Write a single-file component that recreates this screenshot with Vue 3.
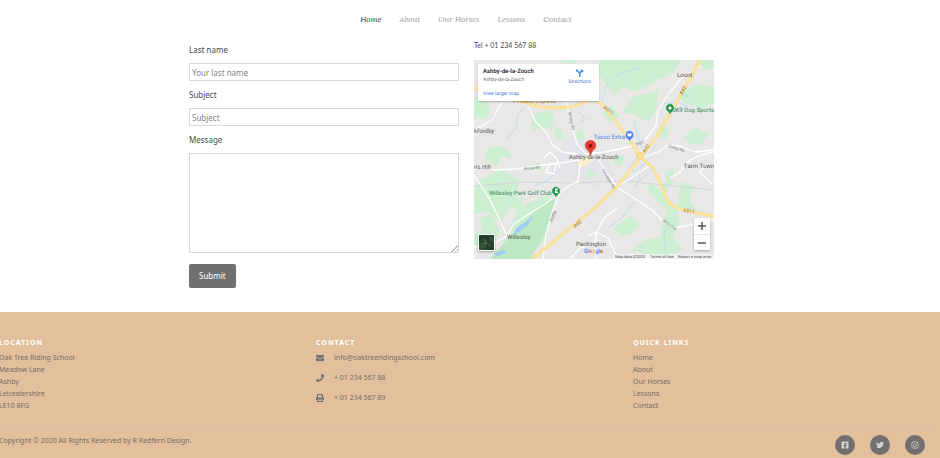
<script setup>
const nav = ['Home', 'About', 'Our Horses', 'Lessons', 'Contact']
const address = ['Oak Tree Riding School', 'Meadow Lane', 'Ashby', 'Leicestershire', 'LE10 8FG']
const contacts = [
  {
    text: 'info@oaktreeridingschool.com',
    icon: 'M502.300 190.800c3.900-3.100 9.700-.2 9.700 4.700V400c0 26.500-21.500 48-48 48H48c-26.500 0-48-21.500-48-48V195.600c0-5 5.700-7.800 9.700-4.700 22.400 17.400 52.100 39.500 154.100 113.600 21.100 15.400 56.700 47.800 92.200 47.600 35.700.3 72-32.800 92.300-47.600 102-74.100 131.600-96.300 154-113.700zM256 320c23.200.4 56.600-29.200 73.400-41.400 132.700-96.300 142.800-104.700 173.400-128.700 5.800-4.500 9.200-11.500 9.200-18.900v-19c0-26.500-21.500-48-48-48H48c-26.500 0-48 21.500-48 48v19c0 7.400 3.400 14.300 9.200 18.900 30.600 23.900 40.700 32.400 173.400 128.700 16.800 12.200 50.200 41.800 73.400 41.400z',
  },
  {
    text: '+ 01 234 567 88',
    icon: 'M493.400 24.600l-104-24c-11.300-2.600-22.900 3.300-27.500 13.900l-48 112c-4.200 9.800-1.400 21.300 6.900 28l60.600 49.600c-36 76.700-98.900 140.500-177.200 177.200l-49.600-60.600c-6.800-8.300-18.200-11.100-28-6.900l-112 48C3.900 366.500-2 378.100.6 389.400l24 104C27.100 504.200 36.700 512 48 512c256.100 0 464-207.500 464-464 0-11.200-7.700-20.900-18.600-23.400z',
  },
  {
    text: '+ 01 234 567 89',
    icon: 'M448 192V77.300c0-8.500-3.400-16.600-9.400-22.600L393.400 9.400c-6-6-14.100-9.400-22.600-9.400H96C78.300 0 64 14.300 64 32v160c-35.300 0-64 28.700-64 64v112c0 8.800 7.200 16 16 16h48v96c0 17.700 14.300 32 32 32h320c17.700 0 32-14.300 32-32v-96h48c8.800 0 16-7.200 16-16V256c0-35.300-28.700-64-64-64zm-64 256H128v-96h256v96zm0-224H128V64h192v48c0 8.800 7.200 16 16 16h48v96zm48 72c-13.300 0-24-10.700-24-24s10.700-24 24-24 24 10.700 24 24-10.700 24-24 24z',
  },
]
const socials = [
  {
    name: 'Facebook',
    box: '0 0 448 512',
    icon: 'M400 32H48A48 48 0 0 0 0 80v352a48 48 0 0 0 48 48h137.300V327.700h-63V256h63v-54.600c0-62.200 37-96.500 93.700-96.500 27.100 0 55.500 4.800 55.500 4.800v61h-31.300c-30.800 0-40.400 19.100-40.400 38.700V256h68.800l-11 71.700h-57.800V480H400a48 48 0 0 0 48-48V80a48 48 0 0 0-48-48z',
  },
  {
    name: 'Twitter',
    box: '0 0 512 512',
    icon: 'M459.400 151.700c.3 4.500.3 9.100.3 13.600 0 138.700-105.600 298.600-298.600 298.600-59.500 0-114.700-17.200-161.100-47.100 8.400 1 16.600 1.300 25.300 1.300 49.100 0 94.200-16.600 130.300-44.800-46.100-1-84.800-31.200-98.100-72.800 6.500 1 13 1.600 19.800 1.600 9.400 0 18.800-1.300 27.600-3.600-48.100-9.700-84.100-52-84.100-103v-1.300c14 7.800 30.200 12.700 47.400 13.300-28.300-18.800-46.800-51-46.800-87.400 0-19.500 5.200-37.400 14.300-53 51.700 63.700 129.300 105.300 216.400 109.800-1.600-7.800-2.600-15.900-2.600-24 0-57.800 46.800-104.900 104.900-104.900 30.200 0 57.500 12.700 76.700 33.100 23.700-4.500 46.500-13.300 66.600-25.300-7.800 24.400-24.400 44.800-46.100 57.800 21.100-2.300 41.600-8.100 60.400-16.200-14.300 20.800-32.200 39.300-52.600 54.300z',
  },
  {
    name: 'Instagram',
    box: '0 0 448 512',
    icon: 'M224 141c-63.600 0-115 51.300-115 115s51.400 115 115 115 115-51.300 115-115-51.400-115-115-115zm0 190c-41 0-75-34-75-75s34-75 75-75 75 34 75 75-34 75-75 75zm146-194a27 27 0 1 1-54 0 27 27 0 0 1 54 0zM130 32h188c72 0 130 58 130 130v188c0 72-58 130-130 130H130C58 480 0 422 0 350V162C0 90 58 32 130 32zm0 42c-50 0-88 38-88 88v188c0 50 38 88 88 88h188c50 0 88-38 88-88V162c0-50-38-88-88-88z',
  },
]
const trunkRoads = [
  'M0 28L20 34L54 43Q64 48 80 48Q98 48 106 44L118 38L128 44L139 58L156 81L166 96L179 108L186 123L193 140Q197 146 204 148L219 152L240 156',
  'M226 0L216 19L206 36L183 76L169 94L143 127L116 152L96 168L58 199',
]
const greens = [
  '0,36 10,38 16,50 12,60 4,56 0,60', '60,54 76,50 80,58 78,70 70,66 66,70 60,64', '80,66 88,70 90,78 82,80',
  '14,88 26,86 36,92 38,98 28,96 22,106 10,98', '104,70 112,74 108,82 102,78', '58,60 64,62 62,72 56,68',
  '126,0 196,0 176,10 182,22 160,32 150,26 140,36 132,24 122,10', '152,0 206,0 200,12 184,20 176,14 166,26 152,16',
  '160,36 174,34 184,30 182,50 174,62 160,54 148,52', '204,36 222,24 240,28 240,44 226,48 212,44',
  '226,0 240,0 240,8 230,10', '186,70 192,66 196,72 190,80 186,78', '146,56 134,62 128,52 138,46',
  '4,120 28,110 46,120 42,138 50,136 46,150 36,146 28,162 14,152 0,154 0,134', '6,158 18,154 26,172 20,180 8,174',
  '0,174 12,170 22,184 8,190 0,186', '44,148 56,142 72,136 82,138 76,160 70,182 50,199 16,199 33,179',
  '172,126 178,124 190,134 202,146 206,162 198,176 208,188 196,199 178,196 158,190 170,180 186,178 188,164 194,152 180,138',
  '140,168 156,156 166,164 158,174 146,176', '206,122 220,126 216,140 222,150 204,148', '192,112 200,108 198,126 192,124',
  '16,124 28,116 38,124 30,132', '60,104 66,102 68,110 62,110', '114,108 122,112 118,120 113,116',
  '140,96 150,96 148,106 140,104', '210,76 222,68 234,74 228,84 216,84', '84,0 104,0 98,4', '188,124 194,122 194,132 188,132',
]
const minorRoads = [
  'M0 110L8 106L20 110L40 109L62 106L78 104L92 102L106 100', 'M0 116L6 124L16 140L24 156L33 176L22 182L0 187',
  'M33 176L40 164L58 152L74 142L84 134L98 124L104 122L106 104', 'M86 134L78 152L72 174L69 199',
  'M54 46L62 62L72 72L78 84L88 92L104 94', 'M28 42L18 60L4 68L0 74', 'M92 42L98 68L103 84L112 94L130 92L150 88L166 84',
  'M226 6L206 20L196 32L184 50L182 66L170 82L160 86', 'M143 127L160 138L178 150L190 162L200 168L222 164L240 160',
  'M124 98L132 112L143 127', 'M143 127L166 112L178 104', 'M169 97L184 92L192 86L206 86L222 92L240 90',
  'M122 199L122 174L130 158L143 148', 'M114 176L122 172L134 178L144 199', 'M96 199L106 188L122 182', 'M196 118L206 112L216 100L230 94L240 92',
  'M70 98L76 92L82 98L86 108', 'M72 112L76 104L82 104L80 114Z', 'M232 104L226 112L238 124',
]
const streams = [
  'M128 42L132 26L144 14L166 8', 'M32 80L42 68L44 54L50 48', 'M154 108L162 98L176 94L182 84', 'M134 168L148 158L160 142',
  'M192 199L190 172L198 164', 'M162 128L168 106L176 98', 'M104 52L110 56L108 62L114 58', 'M204 28L210 36L216 36',
  'M156 104L160 112L172 102L178 110L164 122', 'M160 60L164 78L168 88', 'M60 126L74 120L82 112', 'M190 44L204 42L212 46',
]
</script>

<template>
  <div class="page">
    <nav class="nav" aria-label="Main">
      <a v-for="(n, i) in nav" :key="n" href="#" :class="{ active: i === 0 }">{{ n }}</a>
    </nav>

    <main class="main">
      <form class="form" @submit.prevent>
        <label for="lname">Last name</label>
        <input id="lname" type="text" placeholder="Your last name" />
        <label for="subject">Subject</label>
        <input id="subject" type="text" placeholder="Subject" />
        <label for="message">Message</label>
        <textarea id="message"></textarea>
        <button type="submit">Submit</button>
      </form>

      <section class="side">
        <p class="tel">Tel + 01 234 567 88</p>
        <div class="map">
          <svg class="canvas" viewBox="0 0 240 199" role="img" aria-label="Map of Ashby-de-la-Zouch">
            <defs>
              <linearGradient id="brand">
                <stop offset=".24" stop-color="#4285f4" />
                <stop offset=".24" stop-color="#ea4335" />
                <stop offset=".42" stop-color="#ea4335" />
                <stop offset=".42" stop-color="#fbbc05" />
                <stop offset=".6" stop-color="#fbbc05" />
                <stop offset=".6" stop-color="#4285f4" />
                <stop offset=".77" stop-color="#4285f4" />
                <stop offset=".77" stop-color="#34a853" />
                <stop offset=".84" stop-color="#34a853" />
                <stop offset=".84" stop-color="#ea4335" />
              </linearGradient>
            </defs>
            <rect width="240" height="199" fill="#e9e8e6" />
            <path d="M84 92L96 76L108 80L124 90L140 88L134 100L140 116L120 128L104 120L90 122L74 112L70 100Z" fill="#e4e5e8" />
            <polygon v-for="g in greens" :key="g" :points="g" fill="#ccefd2" />
            <path d="M81 138L74 169L56 199L16 199L33 179L51 162L66 144Z" fill="#bde8c4" />
            <g fill="none" stroke="#b3daf6" stroke-width=".8">
              <path v-for="s in streams" :key="s" :d="s" />
            </g>
            <path d="M39 175Q42 166 50 163L59 156L54 165L45 172ZM20 194L28 190L33 192L24 196Z" fill="#9fcbf5" />
            <path d="M0 126L50 122L100 123L150 121L240 130" fill="none" stroke="#d4d5d6" stroke-width="1" />
            <path d="M104 104L108 98L118 96L119 101L106 108Z" fill="#fdf1cb" />
            <g fill="none" stroke-linejoin="round">
              <g stroke="#fff" stroke-width="1.300">
                <path v-for="r in minorRoads" :key="r" :d="r" />
              </g>
              <g stroke="#f6d77c" stroke-width="2.800">
                <path v-for="t in trunkRoads" :key="t" :d="t" />
              </g>
              <g stroke="#ffe9a3" stroke-width="1.600">
                <path v-for="t in trunkRoads" :key="t" :d="t" />
              </g>
              <circle cx="166" cy="96" r="3" stroke="#f8da82" stroke-width="2" />
            </g>
            <g class="road">
              <text transform="translate(129 48) rotate(38)">A511</text>
              <text transform="translate(208 35) rotate(-58)">A42</text>
              <text transform="translate(171 93) rotate(-55)">A42</text>
              <text transform="translate(101 168) rotate(-38)">A42</text>
              <text transform="translate(209 152) rotate(6)">A511</text>
            </g>
            <g class="lane">
              <text transform="translate(94 52) rotate(78)">Smisby Rd</text>
              <text transform="translate(50 110) rotate(-5)">Moira Rd</text>
              <text transform="translate(78 162) rotate(-66)">B5006</text>
              <text transform="translate(128 110) rotate(60)">Leicester Rd</text>
              <text transform="translate(188 161) rotate(36)">Alton Hill</text>
              <text transform="translate(194 87) rotate(18)">Ashby Rd</text>
              <text transform="translate(162 86) rotate(-18)">B587</text>
            </g>
            <g class="place">
              <text x="203" y="17">Lount</text>
              <text x="0" y="73">kfordby</text>
              <text x="0" y="109">ris Hill</text>
              <text x="95" y="99">Ashby-de-la-Zouch</text>
              <text x="240" y="108" text-anchor="end">Farm Town</text>
              <text x="33" y="179">Willesley</text>
              <text x="102" y="186">Packington</text>
            </g>
            <text class="poi green" x="240" y="52" text-anchor="end">UK9 Dog Sports</text>
            <text class="poi blue" x="151" y="79" text-anchor="end">Tesco Extra</text>
            <text class="poi green" x="78" y="135" text-anchor="end">Willesley Park Golf Club</text>
            <text class="poi orange" x="38" y="43">+ Forest Express</text>
            <g stroke="#fff" stroke-width=".5">
              <path d="M196 55Q195 52 193 51A4.300 4.300 0 1 1 199 51Q197 52 196 55Z" fill="#23994a" />
              <path d="M155.500 82Q154.500 79 152.500 78A4.300 4.300 0 1 1 158.500 78Q156.500 79 155.500 82Z" fill="#4a83ec" />
              <path d="M82 138Q81 135 79 134A4.300 4.300 0 1 1 85 134Q83 135 82 138Z" fill="#23994a" />
            </g>
            <path d="M116.500 96Q115.500 91 113 89.500A5.300 5.300 0 1 1 120 89.500Q117.500 91 116.500 96Z" fill="#ea3d32" stroke="#c5392f" stroke-width=".5" />
            <circle cx="196" cy="48" r="1.600" fill="#fff" />
            <path d="M153 73.500h5l-1 3h-3zM81 128.500h3v1l-2 1.500 2 1v1h-3z" fill="#fff" />
            <circle cx="116.500" cy="86" r="2" fill="#8c1712" />
            <text class="google" x="110" y="193" fill="url(#brand)">Google</text>
            <rect x="139" y="194" width="101" height="5" fill="#f5f5f5" opacity=".75" />
            <g class="legal">
              <text x="141" y="198">Map data ©2020</text>
              <text x="176" y="198">Terms of Use</text>
              <text x="204" y="198">Report a map error</text>
            </g>
          </svg>

          <div class="card">
            <div>
              <strong>Ashby-de-la-Zouch</strong>
              <span>Ashby-de-la-Zouch</span>
              <a href="#">View larger map</a>
            </div>
            <a class="directions" href="#">
              <svg viewBox="0 0 8 8" width="8" height="8">
                <path d="M3.800 8V4.500L1 1.500M3.800 4.500L4.200 3.200Q4.500 2 6 2" fill="none" stroke="#4a90e2" stroke-width="1.500" />
                <path d="M5.200 0L8 2L5.200 4ZM0 3V.5H2.500Z" fill="#4a90e2" />
              </svg>
              Directions
            </a>
          </div>

          <button class="satellite" type="button" aria-label="Satellite view">
            <svg viewBox="0 0 15 15">
              <rect width="15" height="15" fill="#263f2b" />
              <path d="M0 9L5 6L8 10L4 15H0ZM10 1L15 3V8L11 6Z" fill="#35523a" />
              <path d="M4 4L7 6L6 9L9 8M9 11L12 9" stroke="#74816f" stroke-width=".7" fill="none" />
            </svg>
          </button>

          <div class="zoom">
            <button type="button" aria-label="Zoom in"><svg viewBox="0 0 8 8"><path d="M4 0V8M0 4H8" /></svg></button>
            <button type="button" aria-label="Zoom out"><svg viewBox="0 0 8 8"><path d="M0 4H8" /></svg></button>
          </div>
        </div>
      </section>
    </main>

    <footer class="footer">
      <div class="columns">
        <section>
          <h2>LOCATION</h2>
          <p v-for="a in address" :key="a">{{ a }}</p>
        </section>
        <section>
          <h2>CONTACT</h2>
          <ul class="contacts">
            <li v-for="c in contacts" :key="c.text">
              <svg viewBox="0 0 512 512"><path :d="c.icon" /></svg>{{ c.text }}
            </li>
          </ul>
        </section>
        <section>
          <h2>QUICK LINKS</h2>
          <a v-for="n in nav" :key="n" href="#">{{ n }}</a>
        </section>
      </div>
      <div class="bottom">
        <p>Copyright © 2020 All Rights Reserved by R Redfern Design.</p>
        <div class="socials">
          <a v-for="s in socials" :key="s.name" href="#" :aria-label="s.name">
            <svg :viewBox="s.box"><path :d="s.icon" fill-rule="evenodd" /></svg>
          </a>
        </div>
      </div>
    </footer>
  </div>
</template>

<style>
body {
  margin: 0;
  background: #fff;
}
</style>

<style scoped>
.page {
  overflow: hidden;
  font-family: "Noto Sans", "Open Sans", sans-serif;
  font-size: 8px;
  line-height: 12px;
  color: #444b52;
}
.page *,
.page *::before {
  box-sizing: border-box;
}
a {
  color: inherit;
  text-decoration: none;
}
p,
h2,
ul {
  margin: 0;
  padding: 0;
}
.nav {
  display: flex;
  justify-content: center;
  gap: 18px;
  padding: 13px 8px 14px 0;
  font-family: Lora, "Liberation Serif", serif;
  font-style: italic;
  font-size: 8px;
  color: #999;
}
.nav .active {
  color: #333;
}
.main {
  display: grid;
  grid-template-columns: 270px 240px;
  justify-content: center;
  column-gap: 15px;
  padding: 0 37px 24px 0;
}
.form {
  display: flex;
  flex-direction: column;
  align-items: flex-start;
  padding-top: 5px;
}
.form label {
  margin-bottom: 7px;
}
.form input,
.form textarea {
  width: 100%;
  height: 18px;
  margin: 0 0 8px;
  padding: 2px;
  border: 1px solid #d9d9d9;
  background: #fff;
  font: inherit;
  color: inherit;
}
.form textarea {
  height: 100px;
  margin-bottom: 11px;
  resize: vertical;
}
.form textarea::-webkit-resizer {
  background: linear-gradient(135deg, transparent 76%, #bbb 76% 81%, transparent 81% 87%, #bbb 87% 92%, transparent 92%);
}
.form ::placeholder {
  color: #858585;
  opacity: 1;
}
.form button {
  padding: 6px 10px;
  border: 0;
  border-radius: 2px;
  background: #707070;
  color: #fff;
  font: inherit;
}
.tel {
  margin-bottom: 9px;
  font-family: Lato, sans-serif;
  font-size: 7px;
}
.map {
  position: relative;
  font-family: Roboto, sans-serif;
  font-size: 5px;
}
.canvas {
  display: block;
  width: 100%;
  text-rendering: geometricPrecision;
}
.place,
.poi {
  font-size: 6px;
}
.place {
  fill: #555;
}
.green {
  fill: #328555;
}
.blue {
  fill: #4a83ec;
}
.orange {
  fill: #c47d37;
}
.road {
  font-size: 5px;
  fill: #8d6f2e;
}
.lane {
  font-size: 4px;
  fill: #777;
}
.google {
  font-size: 6px;
  font-weight: 500;
}
.legal {
  font-size: 4px;
  fill: #444;
}
.card {
  position: absolute;
  top: 4px;
  left: 4px;
  display: flex;
  justify-content: space-between;
  width: 121px;
  height: 37px;
  padding: 3px 8px 0 5px;
  background: #fff;
  border-radius: 1px;
  box-shadow: 0 1px 2px rgba(0, 0, 0, 0.25);
  line-height: 9px;
  text-rendering: geometricPrecision;
}
.card strong,
.card span {
  display: block;
}
.card strong {
  font-size: 6px;
  font-weight: 500;
  color: #111;
}
.card span {
  margin-bottom: 5px;
  color: #666;
}
.card a {
  color: #3c76d8;
}
.card .directions {
  display: flex;
  flex-direction: column;
  align-items: center;
  padding-top: 2px;
  line-height: 11px;
}
.satellite {
  position: absolute;
  left: 4px;
  bottom: 8px;
  width: 17px;
  height: 17px;
  padding: 0;
  border: 1px solid #fff;
  box-shadow: 0 1px 2px rgba(0, 0, 0, 0.3);
}
.satellite svg {
  display: block;
}
.zoom {
  position: absolute;
  right: 4px;
  bottom: 9px;
  width: 16px;
  background: #fff;
  box-shadow: 0 1px 2px rgba(0, 0, 0, 0.3);
}
.zoom button {
  display: grid;
  place-items: center;
  width: 100%;
  height: 16px;
  padding: 0;
  border: 0;
  background: none;
}
.zoom button + button {
  border-top: 1px solid #e6e6e6;
}
.zoom svg {
  width: 8px;
  height: 8px;
  stroke: #555;
  stroke-width: 1.5;
}
.footer {
  padding-top: 25px;
  background: #e4bf9b;
  color: #736d67;
  font-size: 7px;
}
.columns {
  display: grid;
  grid-template-columns: repeat(3, 317px);
  margin-left: -1px;
  padding-bottom: 14px;
}
.columns h2 {
  margin-bottom: 3px;
  font-size: 7px;
  line-height: 12px;
  letter-spacing: 1px;
  color: #fff;
}
.columns a {
  display: block;
}
.contacts {
  display: grid;
  gap: 8px;
  list-style: none;
}
.contacts li {
  display: flex;
  align-items: center;
  gap: 10px;
}
.contacts svg {
  width: 8px;
  height: 8px;
  fill: #707070;
}
.bottom {
  display: flex;
  justify-content: space-between;
  margin: 0 6px 0 -1px;
  padding: 8px 9px 3px 0;
  border-top: 1px solid #dcbca0;
}
.socials {
  display: flex;
  gap: 15px;
}
.socials a {
  display: grid;
  place-items: center;
  width: 20px;
  height: 20px;
  border-radius: 50%;
  background: #707070;
}
.socials svg {
  width: 8px;
  height: 8px;
  fill: #d2d2d2;
}
</style>
